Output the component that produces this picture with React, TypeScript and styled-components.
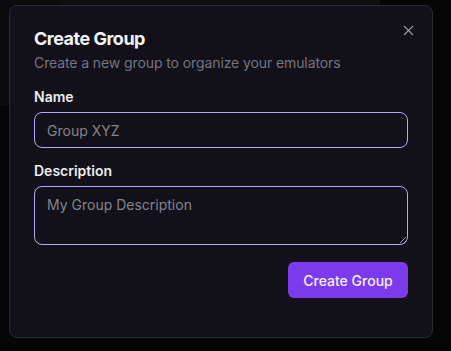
import React from 'react';
import styled, { createGlobalStyle } from 'styled-components';

const Global = createGlobalStyle`
  html, body {
    margin: 0;
    background: #050506;
    font-family: Inter, "Noto Sans", sans-serif;
  }
  * { box-sizing: border-box; }
`;

const Screen = styled.div`
  position: relative;
  width: 451px;
  height: 351px;
  overflow: hidden;
  background: #050506;
`;

const Backdrop = styled.div`
  display: flex;
  height: 100%;
`;

const Sidebar = styled.div`
  width: 60px;
  height: 105px;
  background: #0b0b0e;
  border-bottom-right-radius: 6px;
`;

const TopBar = styled.div`
  width: 320px;
  height: 40px;
  background: #0e0e12;
`;

const Dialog = styled.div`
  position: absolute;
  left: 9px;
  top: 5px;
  width: 424px;
  height: 333px;
  background: #121119;
  border: 1px solid #2a2933;
  border-radius: 8px;
  padding: 21px 24px 24px;
  display: flex;
  flex-direction: column;
`;

const Close = styled.button`
  position: absolute;
  top: 16px;
  right: 16px;
  width: 16px;
  height: 16px;
  padding: 0;
  border: none;
  background: none;
  color: #a3a3ad;
  display: flex;
  align-items: center;
  justify-content: center;
`;

const Title = styled.h2`
  margin: 0;
  font-size: 18px;
  font-weight: 700;
  letter-spacing: -0.5px;
  line-height: 24px;
  color: #f4f4f6;
`;

const Subtitle = styled.p`
  margin: 2px 0 0;
  font-size: 14px;
  line-height: 20px;
  letter-spacing: -0.1px;
  color: #75747f;
`;

const Field = styled.div<{ $top: number }>`
  display: flex;
  flex-direction: column;
  gap: 6px;
  margin-top: ${p => p.$top}px;
`;

const Label = styled.label`
  font-size: 14px;
  font-weight: 600;
  line-height: 18px;
  color: #ececf0;
`;

const fieldCss = `
  width: 100%;
  background: transparent;
  border: 1px solid #bba3f5;
  border-radius: 8px;
  padding: 0 12px;
  font-family: Inter, "Noto Sans", sans-serif;
  font-size: 14px;
  color: #e4e4e8;
  outline: none;
  &::placeholder { color: #85848e; }
`;

const Input = styled.input`
  ${fieldCss}
  height: 36px;
`;

const TextArea = styled.textarea`
  ${fieldCss}
  height: 59px;
  padding-top: 9px;
  resize: vertical;
`;

const Footer = styled.div`
  display: flex;
  justify-content: flex-end;
  margin-top: 17px;
`;

const Primary = styled.button`
  height: 36px;
  width: 120px;
  border: none;
  border-radius: 6px;
  background: #7c3aed;
  color: #f3efff;
  font-family: Inter, "Noto Sans", sans-serif;
  font-size: 14px;
  font-weight: 500;
`;

export default function App() {
  return (
    <Screen>
      <Global />
      <Backdrop>
        <Sidebar />
        <TopBar />
      </Backdrop>
      <Dialog>
        <Close aria-label="Close">
          <svg width="11" height="11" viewBox="0 0 12 12" fill="none" stroke="currentColor" strokeWidth="1.4" strokeLinecap="round">
            <path d="M1.5 1.5l9 9M10.5 1.5l-9 9" />
          </svg>
        </Close>
        <Title>Create Group</Title>
        <Subtitle>Create a new group to organize your emulators</Subtitle>
        <Field $top={15}>
          <Label>Name</Label>
          <Input placeholder="Group XYZ" />
        </Field>
        <Field $top={14}>
          <Label>Description</Label>
          <TextArea placeholder="My Group Description" />
        </Field>
        <Footer>
          <Primary>Create Group</Primary>
        </Footer>
      </Dialog>
    </Screen>
  );
}
